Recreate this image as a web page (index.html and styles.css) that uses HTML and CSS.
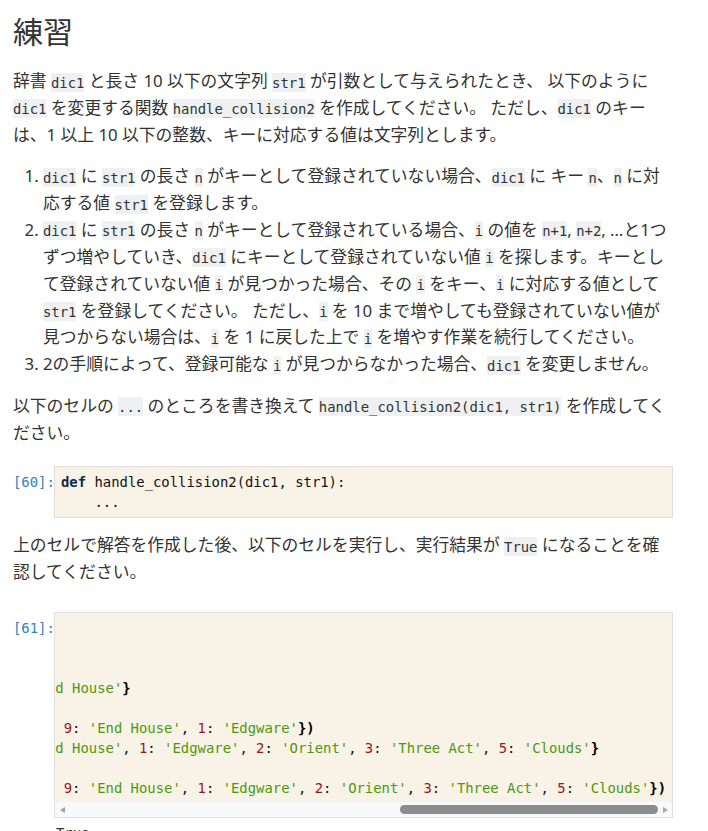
FILE: index.html
```html
<!DOCTYPE html>
<html lang="ja">
<head>
<meta charset="utf-8">
<title>練習</title>
<link rel="stylesheet" href="styles.css">
</head>
<body>
<main class="nb">
  <h1 class="title">練習</h1>

  <p class="md">辞書 <code>dic1</code> と長さ 10 以下の文字列 <code>str1</code> が引数として与えられたとき、 以下のように<br><code>dic1</code> を変更する関数 <code>handle_collision2</code> を作成してください。 ただし、<code>dic1</code> のキー<br>は、1 以上 10 以下の整数、キーに対応する値は文字列とします。</p>

  <ol class="md steps">
    <li><code>dic1</code> に <code>str1</code> の長さ <code>n</code> がキーとして登録されていない場合、<code>dic1</code> に キー <code>n</code>、<code>n</code> に対<br>応する値 <code>str1</code> を登録します。</li>
    <li><code>dic1</code> に <code>str1</code> の長さ <code>n</code> がキーとして登録されている場合、<code>i</code> の値を <code>n+1</code>, <code>n+2</code>, …と1つ<br>ずつ増やしていき、<code>dic1</code> にキーとして登録されていない値 <code>i</code> を探します。キーとし<br>て登録されていない値 <code>i</code> が見つかった場合、その <code>i</code> をキー、<code>i</code> に対応する値として<br><code>str1</code> を登録してください。 ただし、<code>i</code> を 10 まで増やしても登録されていない値が<br>見つからない場合は、<code>i</code> を 1 に戻した上で <code>i</code> を増やす作業を続行してください。</li>
    <li>2の手順によって、登録可能な <code>i</code> が見つからなかった場合、<code>dic1</code> を変更しません。</li>
  </ol>

  <p class="md">以下のセルの <code>...</code> のところを書き換えて <code>handle_collision2(dic1, str1)</code> を作成してく<br>ださい。</p>

  <div class="cell cell-first">
    <div class="prompt">[60]:</div>
    <div class="editor">
      <pre class="code"><span class="kw">def</span> handle_collision2(dic1, str1):
    ...</pre>
    </div>
  </div>

  <p class="md">上のセルで解答を作成した後、以下のセルを実行し、実行結果が <code>True</code> になることを確<br>認してください。</p>

  <div class="cell cell-second">
    <div class="prompt">[61]:</div>
    <div class="cell-body">
      <div class="editor">
        <div class="code-scroll">
<pre class="code">dic1 <span class="op">=</span> <span class="br">{}</span>
handle_collision2(dic1, <span class="str">'Poirot'</span>)
<span class="bi">print</span>(dic1 <span class="op">==</span> <span class="br">{</span><span class="num">6</span>: <span class="str">'Poirot'</span><span class="br">}</span>)
dic1 <span class="op">=</span> <span class="br">{</span><span class="num">7</span>: <span class="str">'Styles'</span>, <span class="num">8</span>: <span class="str">'Sittaford'</span>, <span class="num">10</span>: <span class="str">'Nemesis'</span>, <span class="num">9</span>: <span class="str">'End House'</span><span class="br">}</span>
handle_collision2(dic1, <span class="str">'Edgware'</span>)
<span class="bi">print</span>(dic1 <span class="op">==</span> <span class="br">{</span><span class="num">7</span>: <span class="str">'Styles'</span>, <span class="num">8</span>: <span class="str">'Sittaford'</span>, <span class="num">10</span>: <span class="str">'Nemesis'</span>, <span class="num">9</span>: <span class="str">'End House'</span>, <span class="num">1</span>: <span class="str">'Edgware'</span><span class="br">})</span>
dic1 <span class="op">=</span> <span class="br">{</span><span class="num">7</span>: <span class="str">'Styles'</span>, <span class="num">8</span>: <span class="str">'Sittaford'</span>, <span class="num">10</span>: <span class="str">'Nemesis'</span>, <span class="num">9</span>: <span class="str">'End House'</span>, <span class="num">1</span>: <span class="str">'Edgware'</span>, <span class="num">2</span>: <span class="str">'Orient'</span>, <span class="num">3</span>: <span class="str">'Three Act'</span>, <span class="num">5</span>: <span class="str">'Clouds'</span><span class="br">}</span>
handle_collision2(dic1, <span class="str">'Crooked'</span>)
<span class="bi">print</span>(dic1 <span class="op">==</span> <span class="br">{</span><span class="num">7</span>: <span class="str">'Styles'</span>, <span class="num">8</span>: <span class="str">'Sittaford'</span>, <span class="num">10</span>: <span class="str">'Nemesis'</span>, <span class="num">9</span>: <span class="str">'End House'</span>, <span class="num">1</span>: <span class="str">'Edgware'</span>, <span class="num">2</span>: <span class="str">'Orient'</span>, <span class="num">3</span>: <span class="str">'Three Act'</span>, <span class="num">5</span>: <span class="str">'Clouds'</span><span class="br">})</span></pre>
        </div>
        <div class="hscroll">
          <span class="arrow arrow-left"></span>
          <div class="track"><div class="thumb"></div></div>
          <span class="arrow arrow-right"></span>
        </div>
      </div>
      <div class="output">True
True
True</div>
    </div>
  </div>
</main>
</body>
</html>
```

FILE: styles.css
```css
html, body {
  margin: 0;
  padding: 0;
  background: #ffffff;
}

body {
  font-family: "Noto Sans", "Noto Sans CJK JP", sans-serif;
  color: #333333;
  overflow: hidden;
}

.nb {
  width: 660px;
  padding: 12px 0 0 13px;
}

.title {
  margin: 0 0 17px;
  font-size: 30px;
  font-weight: 400;
  line-height: 39px;
  color: #333333;
}

.md {
  width: 690px;
  margin: 0 0 14.5px;
  font-size: 16.8px;
  line-height: 26.88px;
}

.md code {
  font-family: "DejaVu Sans Mono", monospace;
  font-size: 13.9px;
  line-height: 1;
  background: #eef0f2;
  padding: 1.5px 0;
  color: #333333;
}

.steps {
  padding-left: 30px;
}

.cell {
  display: flex;
  align-items: flex-start;
  width: 660px;
}

.cell-first {
  margin: 20px 0 14px;
}

.cell-second {
  margin-top: 26px;
}

.prompt {
  width: 37px;
  flex: none;
  padding-right: 4px;
  padding-top: 6px;
  font-family: "DejaVu Sans Mono", monospace;
  font-size: 13.9px;
  line-height: 20px;
  color: #307fc1;
  text-align: right;
}

.cell-body {
  flex: 1;
  min-width: 0;
}

.editor {
  flex: 1;
  min-width: 0;
  border: 1px solid #e0e0e0;
  background: #f9f2e7;
}

.cell-first .editor {
  padding: 5px 6px;
}

.code {
  margin: 0;
  font-family: "DejaVu Sans Mono", monospace;
  font-size: 13.9px;
  line-height: 20px;
  color: #111111;
}

.code-scroll {
  direction: rtl;
  overflow: hidden;
  padding: 5px 6px 4px 0;
}

.code-scroll .code {
  direction: ltr;
  width: max-content;
}

.kw {
  font-weight: 700;
  color: #0d2b45;
}

.num {
  color: #a01414;
}

.str {
  color: #4a9a0c;
}

.br {
  font-weight: 700;
  color: #000000;
}

.op {
  color: #7a3e9d;
}

.bi {
  color: #1f7a1f;
}

.hscroll {
  display: flex;
  align-items: center;
  height: 15px;
  background: #f9f9f9;
}

.arrow {
  flex: none;
  width: 0;
  height: 0;
  border-top: 3.5px solid transparent;
  border-bottom: 3.5px solid transparent;
}

.arrow-left {
  margin: 0 6px 0 5px;
  border-right: 5px solid #a0a0a0;
}

.arrow-right {
  margin: 0 4px 0 5px;
  border-left: 5px solid #a8a8a8;
}

.track {
  flex: 1;
  display: flex;
  justify-content: flex-end;
}

.thumb {
  width: 258px;
  height: 9px;
  border-radius: 4.5px;
  background: #8c8c8c;
}

.output {
  margin: 0;
  padding: 5px 0 0 2px;
  font-family: "DejaVu Sans Mono", monospace;
  font-size: 13.9px;
  line-height: 20px;
  color: #333333;
  white-space: pre;
}
```
